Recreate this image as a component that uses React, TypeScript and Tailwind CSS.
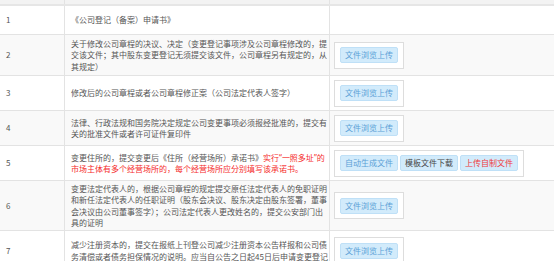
import React from 'react';

type Btn = { label: string; tone?: 'blue' | 'dark' | 'red' };

type Row = {
  no: string;
  lines: React.ReactNode[];
  h: number;
  buttons: Btn[];
};

const Q = ({ c }: { c: string }) => <span className="font-['Noto_Sans']">{c}</span>;

const rows: Row[] = [
  { no: '1', lines: ['《公司登记（备案）申请书》'], h: 29, buttons: [] },
  {
    no: '2',
    lines: [
      '关于修改公司章程的决议、决定（变更登记事项涉及公司章程修改的，提',
      '交该文件；其中股东变更登记无须提交该文件，公司章程另有规定的，从',
      '其规定）',
    ],
    h: 41,
    buttons: [{ label: '文件浏览上传' }],
  },
  {
    no: '3',
    lines: ['修改后的公司章程或者公司章程修正案（公司法定代表人签字）'],
    h: 35,
    buttons: [{ label: '文件浏览上传' }],
  },
  {
    no: '4',
    lines: [
      '法律、行政法规和国务院决定规定公司变更事项必须报经批准的，提交有',
      '关的批准文件或者许可证件复印件',
    ],
    h: 35,
    buttons: [{ label: '文件浏览上传' }],
  },
  {
    no: '5',
    lines: [
      <>
        变更住所的，提交变更后《住所（经营场所）承诺书》
        <span className="text-[#f52b2b]">
          实行<Q c="“" />一照多址<Q c="”" />的
        </span>
      </>,
      <span className="text-[#f52b2b]">市场主体有多个经营场所的，每个经营场所应分别填写该承诺书。</span>,
    ],
    h: 35,
    buttons: [
      { label: '自动生成文件' },
      { label: '模板文件下载', tone: 'dark' },
      { label: '上传自制文件', tone: 'red' },
    ],
  },
  {
    no: '6',
    lines: [
      '变更法定代表人的，根据公司章程的规定提交原任法定代表人的免职证明',
      '和新任法定代表人的任职证明（股东会决议、股东决定由股东签署，董事',
      '会决议由公司董事签字）；公司法定代表人更改姓名的，提交公安部门出',
      '具的证明',
    ],
    h: 50,
    buttons: [{ label: '文件浏览上传' }],
  },
  {
    no: '7',
    lines: [
      '减少注册资本的，提交在报纸上刊登公司减少注册资本公告样报和公司债',
      '务清偿或者债务担保情况的说明。应当自公告之日起45日后申请变更登记',
    ],
    h: 40,
    buttons: [{ label: '文件浏览上传' }],
  },
];

const toneClass = {
  blue: 'text-[#5a9fd6]',
  dark: 'text-[#454545]',
  red: 'text-[#f03a3a]',
};

export default function App() {
  return (
    <div
      className="w-[554px] h-[261px] overflow-hidden bg-white text-[8px] text-[#555]"
      style={{ fontFamily: '"Noto Sans CJK SC", "Noto Sans", sans-serif' }}
    >
      <div className="flex h-[6px] bg-[#f3f3f3] border-b-2 border-[#e6e6e6]">
        <div className="w-[65px] border-r border-[#e3e3e3]" />
        <div className="w-[265px] border-r border-[#e3e3e3]" />
        <div className="flex-1" />
      </div>
      {rows.map((r, i) => (
        <div
          key={r.no}
          className={`flex border-b border-[#e3e3e3] ${i % 2 === 1 ? 'bg-[#f9f9f9]' : 'bg-white'}`}
          style={{ height: r.h }}
        >
          <div className="w-[65px] shrink-0 flex items-center pl-[6px] border-r border-[#e3e3e3]">
            {r.no}
          </div>
          <div className="w-[265px] shrink-0 flex flex-col justify-center pl-[6px] border-r border-[#e3e3e3] leading-[11.5px] whitespace-nowrap">
            {r.lines.map((l, k) => (
              <div key={k}>{l}</div>
            ))}
          </div>
          <div className="flex-1 flex items-center pl-[4px]">
            {r.buttons.length > 0 && (
              <div className="flex gap-[2px] items-center h-[27px] px-[5px] bg-white border border-[#dddddd]">
                {r.buttons.map((b) => (
                  <span
                    key={b.label}
                    className={`h-[16px] px-[4px] flex items-center rounded-[2px] bg-[#d2ebfb] border border-[#bfe0f7] ${toneClass[b.tone ?? 'blue']}`}
                  >
                    {b.label}
                  </span>
                ))}
              </div>
            )}
          </div>
        </div>
      ))}
    </div>
  );
}
